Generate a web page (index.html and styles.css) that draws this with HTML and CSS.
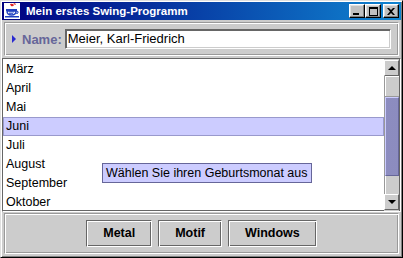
FILE: index.html
```html
<!DOCTYPE html>
<html>
<head>
<meta charset="utf-8">
<link rel="stylesheet" href="styles.css">
</head>
<body>
<div class="window">
  <div class="titlebar">
    <svg class="app-icon" width="16" height="16" viewBox="0 0 16 16">
      <rect x="0" y="0" width="16" height="16" fill="#fff"/>
      <path d="M6 1 q2 -1 4 1 q-1 2 -3 1 z" fill="#e02020"/>
      <path d="M9 1 l2 -1 l1 2 z" fill="#e02020"/>
      <path d="M2 6 h11 v2 h-11 z" fill="#2040c0"/>
      <path d="M3 8 h9 q0 4 -4.5 4 q-4.5 0 -4.5 -4 z" fill="none" stroke="#2040c0" stroke-width="1.4"/>
      <path d="M12 8 q3 0 2 2 q-1 1 -2 0" fill="none" stroke="#2040c0" stroke-width="1"/>
      <path d="M1 13 h14 v1.5 h-14 z" fill="#2040c0"/>
      <path d="M5 9 h5 M5 10.5 h4" stroke="#2040c0" stroke-width="0.8"/>
    </svg>
    <span class="title-text">Mein erstes Swing-Programm</span>
    <div class="title-buttons">
      <div class="tbtn"><svg width="8" height="7" viewBox="0 0 8 7"><rect x="0" y="5" width="6" height="2" fill="#000"/></svg></div>
      <div class="tbtn"><svg width="9" height="9" viewBox="0 0 9 9"><rect x="0.5" y="0.5" width="8" height="8" fill="none" stroke="#000"/><rect x="0" y="0" width="9" height="2" fill="#000"/></svg></div>
      <div class="tbtn close"><svg width="8" height="7" viewBox="0 0 8 7"><path d="M0 0 L2 0 L4 2 L6 0 L8 0 L5 3.5 L8 7 L6 7 L4 5 L2 7 L0 7 L3 3.5 Z" fill="#000"/></svg></div>
    </div>
  </div>
  <div class="content">
    <div class="name-panel">
      <span class="arrow"></span>
      <span class="name-label">Name:</span>
      <div class="textfield">Meier, Karl-Friedrich</div>
    </div>
    <div class="list-pane">
      <ul class="list">
        <li>März</li>
        <li>April</li>
        <li>Mai</li>
        <li class="selected">Juni</li>
        <li>Juli</li>
        <li>August</li>
        <li>September</li>
        <li>Oktober</li>
      </ul>
      <div class="scrollbar">
        <div class="sbtn"><span class="tri-up"></span></div>
        <div class="track">
          <div class="track-gap top"></div>
          <div class="thumb"></div>
          <div class="track-gap bottom"></div>
        </div>
        <div class="sbtn"><span class="tri-down"></span></div>
      </div>
      <div class="tooltip">Wählen Sie ihren Geburtsmonat aus</div>
    </div>
    <div class="button-panel">
      <div class="btn">Metal</div>
      <div class="btn">Motif</div>
      <div class="btn">Windows</div>
    </div>
  </div>
</div>
</body>
</html>
```
FILE: styles.css
```css
html, body {
  margin: 0;
  padding: 0;
  background: #c0c0c0;
}
.window {
  width: 403px;
  height: 258px;
  box-sizing: border-box;
  background: #c0c0c0;
  border: 1px solid;
  border-color: #dfdfdf #000 #000 #dfdfdf;
  box-shadow: inset 1px 1px #fff, inset -1px -1px #808080;
  padding: 1px;
  display: flex;
  flex-direction: column;
  font-family: "Liberation Sans", Arial, sans-serif;
  font-size: 12px;
}
.titlebar {
  height: 18px;
  flex: none;
  background: linear-gradient(to right, #000080, #1084d0);
  display: flex;
  align-items: center;
  padding: 0 2px 0 2px;
}
.app-icon {
  flex: none;
  margin-right: 6px;
}
.title-text {
  color: #fff;
  font-weight: bold;
  font-size: 11.5px;
  flex: 1;
  white-space: nowrap;
}
.title-buttons {
  display: flex;
  align-items: center;
}
.tbtn {
  width: 16px;
  height: 14px;
  box-sizing: border-box;
  background: #c0c0c0;
  border: 1px solid;
  border-color: #fff #000 #000 #fff;
  box-shadow: inset -1px -1px #808080, inset 1px 1px #dfdfdf;
  display: flex;
  align-items: center;
  justify-content: center;
}
.tbtn.close {
  margin-left: 2px;
}
.content {
  flex: 1;
  background: #cccccc;
  display: flex;
  flex-direction: column;
  padding: 2px 0 2px 0;
  min-height: 0;
}
.name-panel {
  height: 34px;
  box-sizing: border-box;
  margin: 0 2px;
  border: 1px solid;
  border-color: #999 #fff #fff #999;
  box-shadow: inset 1px 1px #fff, inset -1px -1px #999;
  display: flex;
  align-items: center;
  padding: 0 7px 0 7px;
}
.arrow {
  width: 0;
  height: 0;
  border-top: 4px solid transparent;
  border-bottom: 4px solid transparent;
  border-left: 4px solid #2a2ad0;
  margin-right: 6px;
}
.name-label {
  color: #666699;
  font-weight: bold;
  font-size: 13px;
  margin-right: 3px;
}
.textfield {
  flex: 1;
  height: 20px;
  box-sizing: border-box;
  background: #fff;
  border: 1px solid;
  border-color: #666 #fff #fff #666;
  box-shadow: inset 1px 1px #666, inset -1px -1px #ccc;
  font-size: 13px;
  line-height: 18px;
  padding-left: 2px;
  color: #000;
}
.list-pane {
  margin-top: 2px;
  height: 154px;
  box-sizing: border-box;
  border: 1px solid;
  border-color: #666 #fff #fff #666;
  box-shadow: inset -1px -1px #666;
  background: #fff;
  display: flex;
  position: relative;
}
.list {
  list-style: none;
  margin: 0;
  padding: 1px 0 0 0;
  flex: 1;
  overflow: hidden;
}
.list li {
  height: 19px;
  line-height: 19px;
  font-size: 12.5px;
  padding-left: 3px;
  color: #000;
}
.list li.selected {
  background: #ccccff;
  box-shadow: inset 0 0 0 1px #9999cc;
}
.scrollbar {
  width: 15px;
  flex: none;
  display: flex;
  flex-direction: column;
  padding: 1px 0 1px 0;
  margin-right: 1px;
  background: #cccccc;
}
.sbtn {
  height: 16px;
  flex: none;
  box-sizing: border-box;
  background: #cccccc;
  border: 1px solid;
  border-color: #fff #666 #666 #fff;
  display: flex;
  align-items: center;
  justify-content: center;
}
.tri-up {
  width: 0;
  height: 0;
  border-left: 4px solid transparent;
  border-right: 4px solid transparent;
  border-bottom: 4px solid #000;
}
.tri-down {
  width: 0;
  height: 0;
  border-left: 4px solid transparent;
  border-right: 4px solid transparent;
  border-top: 4px solid #000;
}
.track {
  flex: 1;
  display: flex;
  flex-direction: column;
  background: #cccccc;
  border-left: 1px solid #999;
}
.track-gap.top {
  height: 20px;
  border-bottom: 1px solid #999;
  box-shadow: inset 1px 1px #fff;
}
.track-gap.bottom {
  flex: 1;
  box-shadow: inset 1px 0 #fff;
}
.thumb {
  height: 79px;
  box-sizing: border-box;
  border: 1px solid;
  border-color: #ccccff #666699 #666699 #ccccff;
  background-color: #ccccff;
  background-image: radial-gradient(circle, #8888bb 0.7px, transparent 0.8px);
  background-size: 2px 2px;
}
.tooltip {
  position: absolute;
  left: 99px;
  top: 104px;
  height: 20px;
  box-sizing: border-box;
  background: #ccccff;
  border: 1px solid #666699;
  color: #000;
  font-size: 12.5px;
  line-height: 18px;
  padding: 0 3px;
  white-space: nowrap;
}
.button-panel {
  margin: 1px 2px 0 2px;
  height: 41px;
  box-sizing: border-box;
  border: 1px solid;
  border-color: #999 #fff #fff #999;
  box-shadow: inset 1px 1px #fff, inset -1px -1px #999;
  display: flex;
  align-items: center;
  justify-content: center;
  gap: 6px;
}
.btn {
  height: 27px;
  box-sizing: border-box;
  border: 1px solid;
  border-color: #666 #fff #fff #666;
  box-shadow: inset 1px 1px #fff, inset -1px -1px #666;
  background: #cccccc;
  font-weight: bold;
  font-size: 12.5px;
  line-height: 25px;
  padding: 0 16px;
  color: #000;
}
```
